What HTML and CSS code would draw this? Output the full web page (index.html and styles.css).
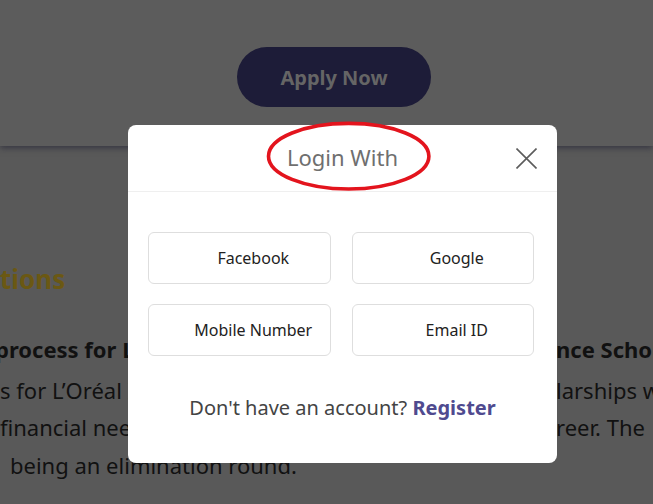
FILE: index.html
```html
<!DOCTYPE html>
<html lang="en">
<head>
<meta charset="utf-8">
<title>Login With</title>
<link rel="stylesheet" href="styles.css">
</head>
<body>
<div class="page">
  <section class="hero">
    <a class="apply" href="#">Apply Now</a>
  </section>
  <section class="content">
    <h2 class="heading">tions</h2>
    <div class="line bold">
      <span class="left ind-p">process for L’Oréal India For Young Women In Science Scholarship</span>
      <span class="right">nce Scholarship</span>
    </div>
    <div class="line first">
      <span class="left">s for L’Oréal India For Young Women In Science Scholarships</span>
      <span class="right">larships worth</span>
    </div>
    <div class="line">
      <span class="left">financial need and wish to pursue a science career.</span>
      <span class="right">reer. The</span>
    </div>
    <div class="line">
      <span class="left ind-b">being an elimination round.</span>
      <span class="right"></span>
    </div>
  </section>
</div>

<div class="modal">
  <div class="modal-header">
    <span></span>
    <h1 class="modal-title">Login With</h1>
    <button class="close" aria-label="Close">
      <svg width="21" height="21" viewBox="0 0 21 21"><path d="M0.5 0.5 L20.5 20.5 M20.5 0.5 L0.5 20.5" stroke="#5c5c5c" stroke-width="1.6" fill="none"/></svg>
    </button>
  </div>
  <div class="modal-body">
    <div class="options">
      <button class="opt">Facebook</button>
      <button class="opt">Google</button>
      <button class="opt">Mobile Number</button>
      <button class="opt">Email ID</button>
    </div>
    <p class="signup">Don't have an account? <a href="#">Register</a></p>
  </div>
</div>

<svg class="annotation" width="170" height="76" viewBox="0 0 170 76">
  <ellipse cx="84.7" cy="37.2" rx="80.2" ry="32.8" fill="none" stroke="#e3141d" stroke-width="3.6"/>
</svg>
</body>
</html>
```

FILE: styles.css
```css
* { box-sizing: border-box; }

html, body {
  margin: 0;
  padding: 0;
  overflow: hidden;
}

body {
  width: 653px;
  height: 504px;
  background: #595959;
  font-family: "Noto Sans", "Open Sans", sans-serif;
}

.page {
  width: 653px;
  overflow: hidden;
}

.hero {
  height: 146px;
  background: #5c5c5c;
  display: flex;
  justify-content: center;
  padding: 47px 0 0 15px;
  box-shadow: 0 2px 6px rgba(25, 25, 45, 0.55);
  position: relative;
  z-index: 1;
}

.apply {
  width: 194px;
  height: 60px;
  border-radius: 30px;
  background: #1d1c38;
  color: #656565;
  font-weight: 700;
  font-size: 20px;
  text-decoration: none;
  display: flex;
  align-items: center;
  justify-content: center;
}

.content {
  padding-top: 115px;
  color: #111;
}

.heading {
  margin: 0;
  font-size: 26px;
  line-height: 36px;
  font-weight: 700;
  color: #6b5813;
}

.line {
  display: grid;
  grid-template-columns: 556px auto;
  white-space: nowrap;
  font-size: 22px;
  line-height: 37.4px;
}

.line.bold {
  font-weight: 700;
  line-height: 38px;
  margin-top: 33px;
}

.line.first {
  margin-top: 4px;
}

.left {
  overflow: hidden;
}

.ind-p { text-indent: -5px; }
.ind-b { padding-left: 10px; }

.modal {
  position: fixed;
  left: 128px;
  top: 125px;
  width: 429px;
  background: #fff;
  border-radius: 8px;
  z-index: 10;
}

.modal-header {
  height: 67px;
  border-bottom: 1px solid #efefef;
  display: grid;
  grid-template-columns: 1fr auto 1fr;
  align-items: center;
}

.modal-title {
  margin: 0;
  font-size: 22px;
  font-weight: 400;
  color: #6f6f6f;
  line-height: 30px;
  padding-bottom: 2px;
}

.close {
  justify-self: end;
  margin-right: 20px;
  padding: 0;
  border: 0;
  background: none;
  width: 21px;
  height: 21px;
  display: block;
}

.close svg { display: block; }

.modal-body {
  padding: 40px 23px 42px 20px;
}

.options {
  display: grid;
  grid-template-columns: 1fr 1fr;
  column-gap: 21px;
  row-gap: 20px;
}

.opt {
  height: 52px;
  background: #fff;
  border: 1px solid #dedede;
  border-radius: 6px;
  font-family: "Noto Sans", sans-serif;
  font-size: 16px;
  color: #222;
  padding: 0 0 0 28px;
  display: flex;
  align-items: center;
  justify-content: center;
}

.signup {
  margin: 39px 0 0;
  text-align: center;
  font-size: 20px;
  line-height: 26px;
  color: #444;
  padding-left: 3px;
}

.signup a {
  color: #4f4a8f;
  font-weight: 700;
  text-decoration: none;
}

.annotation {
  position: fixed;
  left: 264px;
  top: 119px;
  z-index: 20;
}
```
